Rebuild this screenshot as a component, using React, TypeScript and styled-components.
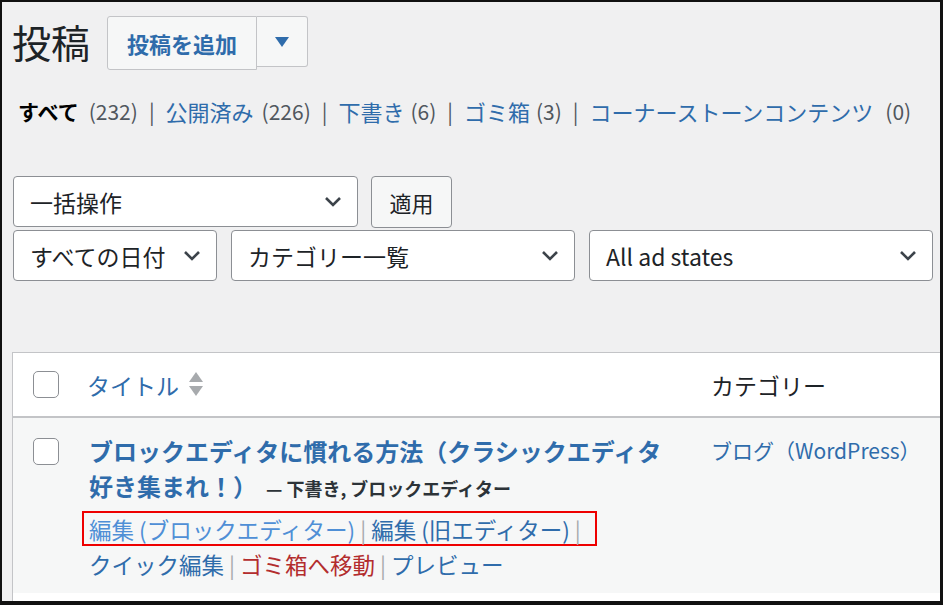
import React from 'react';
import styled, { createGlobalStyle } from 'styled-components';

const GlobalStyle = createGlobalStyle`
  html, body {
    margin: 0;
    padding: 0;
    background: #111;
  }
  body {
    font-family: "Noto Sans CJK JP", "Noto Sans", sans-serif;
    color: #1d2327;
  }
  * {
    box-sizing: border-box;
  }
`;

const BLUE = '#2f6cab';

const Frame = styled.div`
  width: 943px;
  height: 605px;
  border-style: solid;
  border-color: #111;
  border-width: 2px 3px 4px 2px;
  background: #f0f0f1;
  overflow: hidden;
`;

const Wrap = styled.div`
  padding: 14px 0 0 10px;
`;

const HeaderRow = styled.div`
  display: flex;
  align-items: flex-start;
`;

const PageTitle = styled.h1`
  margin: -2px 17px 0 0;
  font-size: 39px;
  line-height: 54px;
  font-weight: 400;
  color: #1d2327;
`;

const AddButton = styled.div`
  height: 54px;
  width: 150px;
  display: flex;
  align-items: center;
  justify-content: center;
  background: #f6f7f7;
  border: 1px solid #c3c4c7;
  border-radius: 3px 0 0 3px;
  color: ${BLUE};
  font-size: 22px;
  font-weight: 700;
`;

const ToggleButton = styled.div`
  height: 51px;
  width: 51px;
  display: flex;
  align-items: center;
  justify-content: center;
  background: #f6f7f7;
  border: 1px solid #c3c4c7;
  border-left: none;
  border-radius: 0 3px 3px 0;
`;

const Subsubsub = styled.div`
  margin-top: 26px;
  padding-left: 6px;
  font-size: 21px;
  line-height: 30px;
  display: flex;
  align-items: center;
  white-space: nowrap;
`;

const Current = styled.span`
  font-weight: 700;
  color: #000;
`;

const FilterLink = styled.span`
  color: ${BLUE};
  font-size: 22px;
`;

const Count = styled.span<{ gap?: number }>`
  color: #50575e;
  margin-left: ${(p) => p.gap ?? 8}px;
`;

const Sep = styled.span`
  color: #50575e;
  margin: 0 11px;
`;

const Filters = styled.div`
  margin-top: 50px;
  padding-left: 1px;
  display: flex;
  flex-direction: column;
  gap: 2px;
`;

const FilterRow = styled.div<{ gap: number }>`
  display: flex;
  gap: ${(p) => p.gap}px;
`;

const Select = styled.div<{ w: number }>`
  width: ${(p) => p.w}px;
  height: 51px;
  background: #fff;
  border: 1px solid #8c8f94;
  border-radius: 4px;
  display: flex;
  align-items: center;
  justify-content: space-between;
  padding: 0 15px 0 16px;
  font-size: 23px;
  color: #1d2327;
  white-space: nowrap;
`;

const ApplyButton = styled.div`
  width: 81px;
  height: 52px;
  display: flex;
  align-items: center;
  justify-content: center;
  background: #f6f7f7;
  border: 1px solid #8c8f94;
  border-radius: 4px;
  font-size: 22px;
  color: #1d2327;
`;

const Table = styled.div`
  margin-top: 71px;
  background: #fff;
  border-top: 1px solid #c3c4c7;
  border-left: 1px solid #c3c4c7;
  width: 930px;
  height: 300px;
`;

const Grid = styled.div<{ head?: boolean }>`
  display: grid;
  grid-template-columns: 74px 624px 1fr;
  background: ${(p) => (p.head ? '#fff' : '#f6f7f7')};
  border-bottom: ${(p) => (p.head ? '2px solid #c3c4c7' : 'none')};
  height: ${(p) => (p.head ? '65px' : 'auto')};
  align-items: ${(p) => (p.head ? 'center' : 'start')};
  padding: ${(p) => (p.head ? '0' : '15px 0 12px')};
`;

const CheckCell = styled.div<{ top?: number }>`
  padding-left: 20px;
  padding-top: ${(p) => p.top ?? 0}px;
  display: flex;
`;

const Checkbox = styled.div`
  width: 26px;
  height: 27px;
  background: #fff;
  border: 1px solid #8c8f94;
  border-radius: 5px;
`;

const HeadTitle = styled.div`
  display: flex;
  align-items: center;
  gap: 10px;
  font-size: 23px;
  color: ${BLUE};
`;

const HeadCategory = styled.div`
  font-size: 23px;
  color: #1d2327;
`;

const TitleCell = styled.div`
  padding-left: 2px;
  padding-right: 30px;
`;

const PostTitle = styled.div`
  font-size: 24px;
  line-height: 35px;
  font-weight: 700;
  color: ${BLUE};
`;

const PostState = styled.span`
  font-size: 18px;
  line-height: 1;
  font-weight: 700;
  color: #2c3338;
  margin-left: 9px;
`;

const ActionBox = styled.div`
  display: inline-flex;
  align-items: center;
  margin: 8px 0 0 -7px;
  padding: 0 9px 0 5px;
  height: 35px;
  border: 2px solid #ee0000;
  white-space: nowrap;
`;

const ActionLine = styled.div`
  display: flex;
  align-items: center;
  height: 35px;
  white-space: nowrap;
`;

const Action = styled.span<{ tone?: 'light' | 'danger' }>`
  font-size: 22.5px;
  color: ${(p) => (p.tone === 'light' ? '#4f8fd6' : p.tone === 'danger' ? '#b32d2e' : BLUE)};
`;

const ActionSep = styled.span`
  font-size: 22px;
  color: #a7aaad;
  margin: 0 5px;
`;

const CategoryCell = styled.div`
  font-size: 21px;
  line-height: 35px;
  color: ${BLUE};
`;

const Chevron = () => (
  <svg width="18" height="12" viewBox="0 0 18 12">
    <polyline points="2,2 9,9 16,2" fill="none" stroke="#3c434a" strokeWidth="2.6" />
  </svg>
);

const SortArrows = () => (
  <svg width="14" height="25" viewBox="0 0 14 25">
    <polygon points="7,0 14,10 0,10" fill="#a7aaad" />
    <polygon points="0,14 14,14 7,24" fill="#a7aaad" />
  </svg>
);

export default function App() {
  return (
    <>
      <GlobalStyle />
      <Frame>
        <Wrap>
          <HeaderRow>
            <PageTitle>投稿</PageTitle>
            <AddButton>投稿を追加</AddButton>
            <ToggleButton>
              <svg width="14" height="10" viewBox="0 0 14 10">
                <polygon points="0,0 14,0 7,10" fill={BLUE} />
              </svg>
            </ToggleButton>
          </HeaderRow>

          <Subsubsub>
            <Current>すべて</Current>
            <Count gap={10}>(232)</Count>
            <Sep>|</Sep>
            <FilterLink>公開済み</FilterLink>
            <Count>(226)</Count>
            <Sep>|</Sep>
            <FilterLink>下書き</FilterLink>
            <Count gap={6}>(6)</Count>
            <Sep>|</Sep>
            <FilterLink>ゴミ箱</FilterLink>
            <Count gap={6}>(3)</Count>
            <Sep>|</Sep>
            <FilterLink>コーナーストーンコンテンツ</FilterLink>
            <Count gap={12}>(0)</Count>
          </Subsubsub>

          <Filters>
            <FilterRow gap={13}>
              <Select w={345}>
                一括操作
                <Chevron />
              </Select>
              <ApplyButton>適用</ApplyButton>
            </FilterRow>
            <FilterRow gap={14}>
              <Select w={204}>
                すべての日付
                <Chevron />
              </Select>
              <Select w={344}>
                カテゴリー一覧
                <Chevron />
              </Select>
              <Select w={344}>
                All ad states
                <Chevron />
              </Select>
            </FilterRow>
          </Filters>

          <Table>
            <Grid head>
              <CheckCell>
                <Checkbox />
              </CheckCell>
              <HeadTitle>
                タイトル
                <SortArrows />
              </HeadTitle>
              <HeadCategory>カテゴリー</HeadCategory>
            </Grid>
            <Grid>
              <CheckCell top={5}>
                <Checkbox />
              </CheckCell>
              <TitleCell>
                <PostTitle>
                  ブロックエディタに慣れる方法（クラシックエディタ好き集まれ！）
                  <PostState>— 下書き, ブロックエディター</PostState>
                </PostTitle>
                <ActionBox>
                  <Action tone="light">編集 (ブロックエディター)</Action>
                  <ActionSep>|</ActionSep>
                  <Action>編集 (旧エディター)</Action>
                  <ActionSep>|</ActionSep>
                </ActionBox>
                <ActionLine>
                  <Action>クイック編集</Action>
                  <ActionSep>|</ActionSep>
                  <Action tone="danger">ゴミ箱へ移動</Action>
                  <ActionSep>|</ActionSep>
                  <Action>プレビュー</Action>
                </ActionLine>
              </TitleCell>
              <CategoryCell>ブログ（WordPress）</CategoryCell>
            </Grid>
          </Table>
        </Wrap>
      </Frame>
    </>
  );
}
